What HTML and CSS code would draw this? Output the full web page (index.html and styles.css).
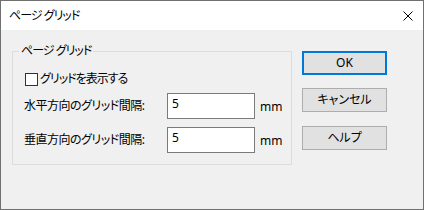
FILE: index.html
```html
<!DOCTYPE html>
<html lang="ja">
<head>
    <meta charset="UTF-8">
    <title>ページ グリッド</title>
    <link rel="stylesheet" href="styles.css">
</head>
<body>

<div class="window">
    <div class="titlebar">
        <span class="title">ページ グリッド</span>
        <svg class="close" width="10" height="10" viewBox="0 0 10 10">
            <path d="M0.5 0.5 L9.5 9.5 M9.5 0.5 L0.5 9.5" stroke="#000" stroke-width="1" fill="none"/>
        </svg>
    </div>
    <div class="content">
        <fieldset class="group">
            <legend>ページ グリッド</legend>
            <div class="options">
                <label class="check-row">
                    <input type="checkbox" class="check">
                    <span class="kana">グリッドを表示する</span>
                </label>
                <span class="label">水平方向のグリッド間隔:</span>
                <input type="text" class="field" value="5">
                <span class="unit">mm</span>
                <span class="label">垂直方向のグリッド間隔:</span>
                <input type="text" class="field" value="5">
                <span class="unit">mm</span>
            </div>
        </fieldset>
        <div class="buttons">
            <button class="default">OK</button>
            <button>キャンセル</button>
            <button class="help">ヘルプ</button>
        </div>
    </div>
</div>

</body>
</html>
```

FILE: styles.css
```css
body {
    margin: 0;
    font-family: "Noto Sans", "Noto Sans CJK JP", sans-serif;
    font-size: 12px;
    line-height: 16px;
    color: #000;
    font-feature-settings: "palt";
}
.window {
    width: 424px;
    height: 210px;
    box-sizing: border-box;
    border: 1px solid #707070;
    background-color: #f0f0f0;
}
.titlebar {
    height: 29px;
    background-color: #fff;
    display: flex;
    align-items: center;
    padding: 0 10px 0 8px;
}
.title,
.kana,
.group legend {
    letter-spacing: -1px;
}
.close {
    margin-left: auto;
}
.content {
    display: flex;
    align-items: flex-start;
    padding: 13px 0 0 11px;
    gap: 10px;
}
.group {
    margin: 0;
    width: 280px;
    box-sizing: border-box;
    border: 1px solid #dcdcdc;
    padding: 0 0 11px 11px;
    min-width: 0;
}
.group legend {
    margin-left: -5px;
    padding: 0 2px;
}
.options {
    display: grid;
    grid-template-columns: 143px 88px auto;
    row-gap: 8px;
    align-items: center;
    margin-top: 12px;
}
.label {
    letter-spacing: -0.5px;
}
.check-row {
    grid-column: 1 / 4;
    display: flex;
    align-items: center;
    gap: 2px;
    margin-bottom: -2px;
}
.check {
    appearance: none;
    margin: 0 0 0 1px;
    width: 13px;
    height: 13px;
    border: 1px solid #333;
    background-color: #fff;
}
.field {
    width: 88px;
    height: 26px;
    box-sizing: border-box;
    margin: 0;
    border: 1px solid #7a7a7a;
    padding: 1px 4px 7px;
    font: inherit;
    color: #000;
    background-color: #fff;
    outline: none;
}
.unit {
    margin-left: 5px;
    align-self: end;
    margin-bottom: 4px;
}
.buttons {
    display: flex;
    flex-direction: column;
    gap: 13px;
    margin-top: 8px;
}
button {
    width: 85px;
    height: 24px;
    box-sizing: border-box;
    border: 1px solid #adadad;
    background-color: #e1e1e1;
    font: inherit;
    color: #000;
    padding: 0;
}
button.default {
    border: 2px solid #0078d7;
}
button.help {
    margin-top: 1px;
}
```
